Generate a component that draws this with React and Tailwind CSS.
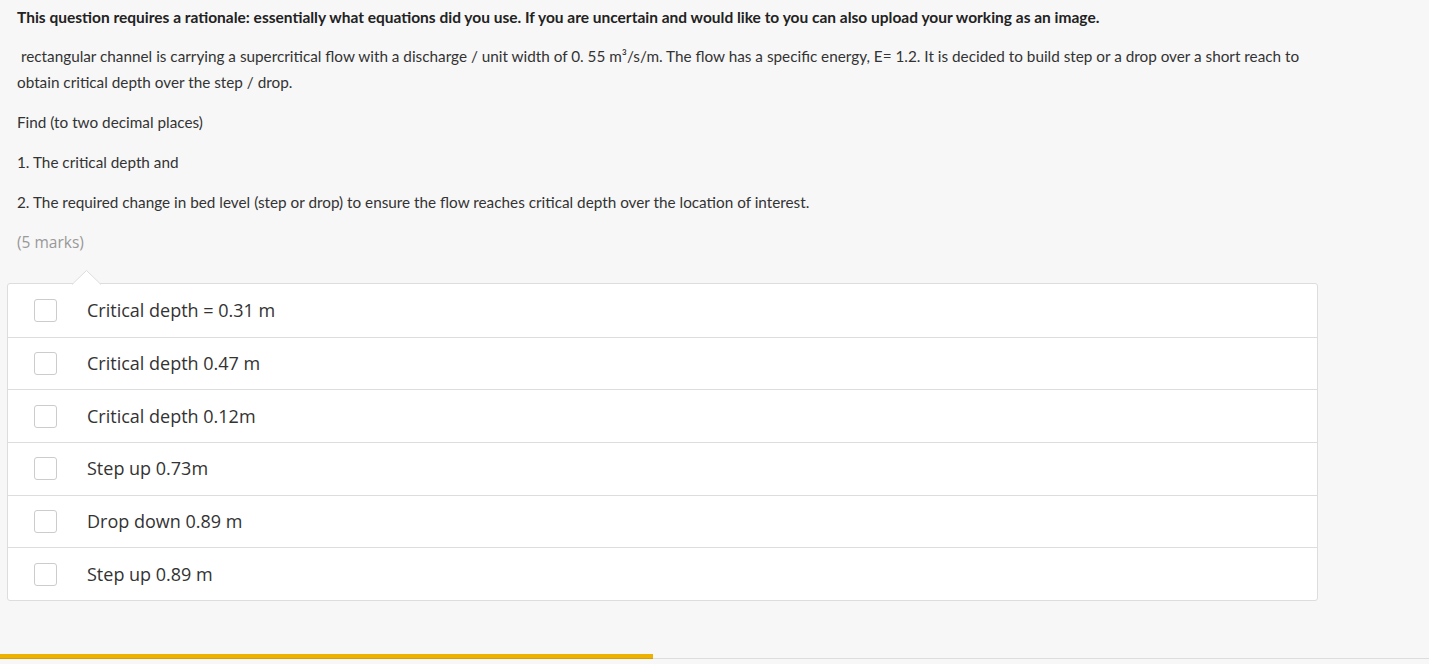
import React from 'react';

const options = [
  'Critical depth = 0.31 m',
  'Critical depth 0.47 m',
  'Critical depth 0.12m',
  'Step up 0.73m',
  'Drop down 0.89 m',
  'Step up 0.89 m',
];

export default function App() {
  return (
    <div className="h-[664px] bg-[#f7f7f7] flex flex-col overflow-hidden">
      <div className="flex-1">
        {/* question text */}
        <div className="pl-[17px] pr-4 pt-[7px] text-[15.3px] leading-[26px] text-[#333] font-['Lato',sans-serif]">
          <p className="font-bold text-[15.5px] leading-[20px] text-[#222]">
            This question requires a rationale: essentially what equations did you use. If you are uncertain and would like to you can also upload your working as an image.
          </p>
          <p className="mt-[16px] pr-[100px]">
            &nbsp;rectangular channel is carrying a supercritical flow with a discharge / unit width of 0. 55 m³/s/m. The flow has a specific energy, E= 1.2. It is decided to build step or a drop over a short reach to obtain critical depth over the step / drop.
          </p>
          <p className="mt-[14px]">Find (to two decimal places)</p>
          <p className="mt-[14px]">1. The critical depth and</p>
          <p className="mt-[14px]">2. The required change in bed level (step or drop) to ensure the flow reaches critical depth over the location of interest.</p>
          <p className="mt-[14px] text-[#999] text-[15.5px] font-['Open_Sans',sans-serif]">(5 marks)</p>
        </div>

        {/* answers card */}
        <div className="relative ml-[7px] mt-[28px] w-[1311px] bg-white border border-[#ddd] rounded-[3px]">
          <svg className="absolute left-[64px] -top-[14px]" width="29" height="15" viewBox="0 0 29 15">
            <path d="M0 14.5 L14.5 0.5 L29 14.5" fill="#fff" stroke="#ddd" strokeWidth="1" />
          </svg>
          {options.map((opt, i) => (
            <div
              key={i}
              className={`flex items-center h-[52.7px] ${i > 0 ? 'border-t border-[#ddd]' : ''}`}
            >
              <span className="ml-[26px] w-[23px] h-[23px] border border-[#ccc] rounded-[3px] bg-white shrink-0" />
              <span className="ml-[30px] text-[18px] text-[#333] font-['Open_Sans',sans-serif]">{opt}</span>
            </div>
          ))}
        </div>
      </div>

      {/* progress bar */}
      <div className="h-[10px] flex items-end">
        <div className="w-[653px] h-[5px] bg-[#edb100] border-b border-[#d79f00]" />
        <div className="flex-1 h-[1px] bg-[#ddd]" />
      </div>
      <div className="h-[5px]" />
    </div>
  );
}
